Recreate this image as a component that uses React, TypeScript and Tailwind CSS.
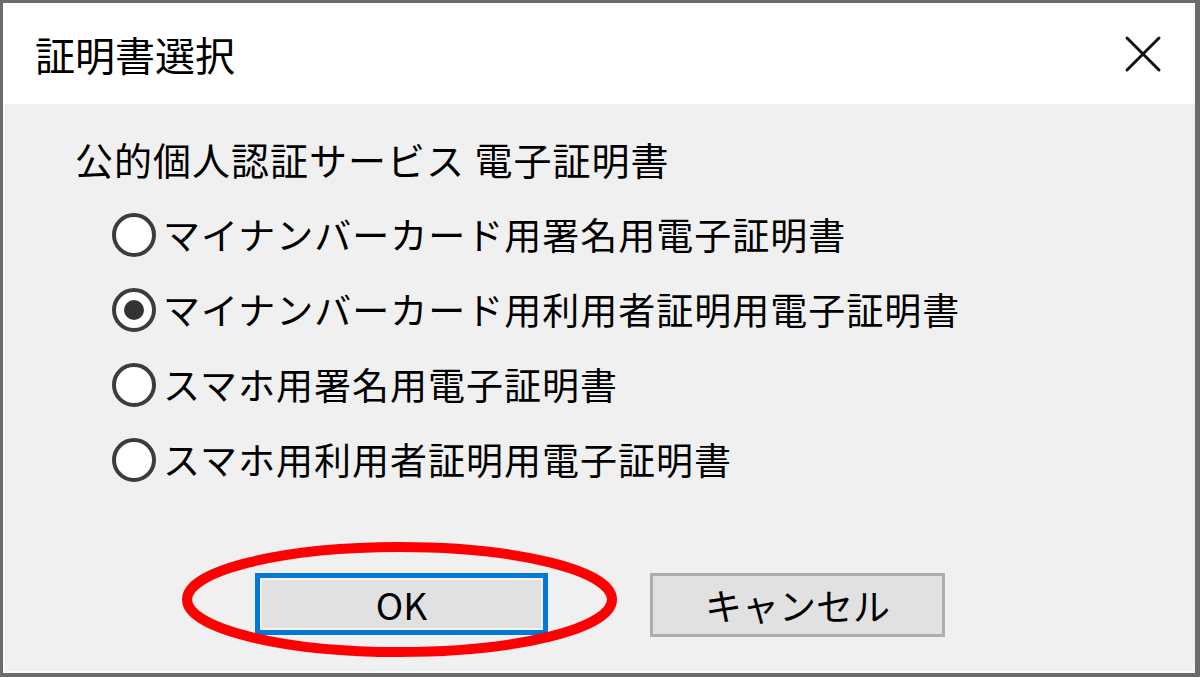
import React from "react";

const font = { fontFamily: '"Noto Sans CJK JP", "Noto Sans", sans-serif' };

const options = [
  { label: "マイナンバーカード用署名用電子証明書", checked: false },
  { label: "マイナンバーカード用利用者証明用電子証明書", checked: true },
  { label: "スマホ用署名用電子証明書", checked: false },
  { label: "スマホ用利用者証明用電子証明書", checked: false },
];

const Radio: React.FC<{ checked: boolean }> = ({ checked }) => (
  <span className="w-[44px] h-[44px] rounded-full border-[4px] border-[#3c3c3c] bg-white flex items-center justify-center shrink-0">
    {checked && <span className="w-[20px] h-[20px] rounded-full bg-[#333333]" />}
  </span>
);

export default function App() {
  return (
    <div className="relative w-[1200px] h-[677px] overflow-hidden text-black" style={font}>
      <div className="w-full h-full border-t-[3px] border-l-[3px] border-r-[5px] border-b-[4px] border-[#6b6b6b] flex flex-col">
        {/* title bar */}
        <div className="h-[101px] bg-white flex items-center justify-between pl-[32px] pr-[33px] shrink-0">
          <span className="text-[40px] leading-none">証明書選択</span>
          <svg width="38" height="38" viewBox="0 0 38 38">
            <path d="M3 3 L35 35 M35 3 L3 35" stroke="#111" strokeWidth="3" strokeLinecap="round" />
          </svg>
        </div>

        {/* body */}
        <div className="flex-1 bg-[#f0f0f0] pl-[70px] pt-[17px] border-l-[2px] border-b-[2px] border-[#fafafa]">
          <div className="h-[76px] flex items-center text-[38px] tracking-[1px] leading-none">
            公的個人認証サービス 電子証明書
          </div>
          <div className="pl-[37px]">
            {options.map((o) => (
              <div key={o.label} className="h-[75px] flex items-center gap-[7px]">
                <Radio checked={o.checked} />
                <span className="text-[37px] tracking-[1px] leading-none whitespace-nowrap">{o.label}</span>
              </div>
            ))}
          </div>

          <div className="flex mt-[76px] pl-[180px] gap-[102px]">
            <button className="w-[293px] h-[62px] border-[5px] border-solid border-[#0078d7] bg-[#e1e1e1] shadow-[inset_0_0_0_2px_#f7efe8] flex items-center justify-center text-[37px] leading-none" style={font}>
              OK
            </button>
            <button className="w-[295px] h-[64px] border-3 border-solid border-[#adadad] bg-[#e1e1e1] flex items-center justify-center text-[37px] leading-none" style={font}>
              キャンセル
            </button>
          </div>
        </div>
      </div>

      {/* red annotation */}
      <svg className="absolute top-0 left-0 pointer-events-none" width="1200" height="677">
        <ellipse cx="399.5" cy="599.5" rx="212.5" ry="52.5" fill="none" stroke="#ff0000" strokeWidth="10" />
      </svg>
    </div>
  );
}
